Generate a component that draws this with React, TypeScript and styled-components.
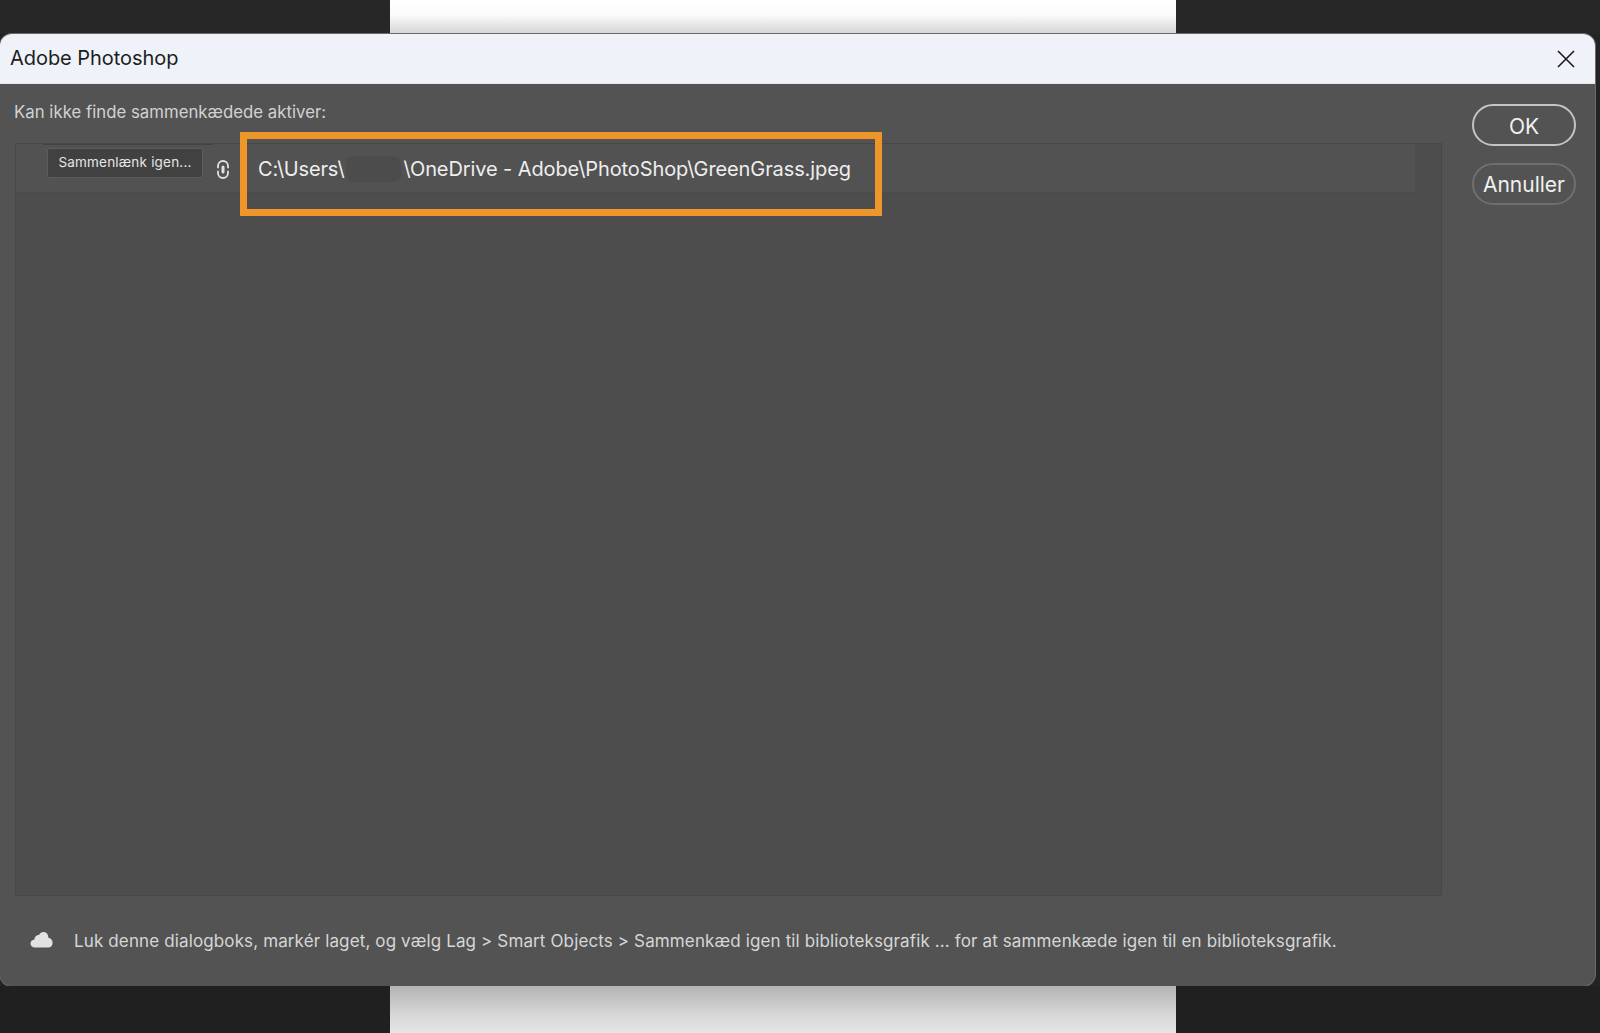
import React from "react";
import styled, { createGlobalStyle } from "styled-components";

const GlobalStyle = createGlobalStyle`
  html, body {
    margin: 0;
    padding: 0;
    background: #232323;
  }

  body {
    font-family: Inter, "Noto Sans", "Liberation Sans", sans-serif;
    overflow: hidden;
  }
`;

const Page = styled.div`
  width: 1600px;
  height: 1033px;
  display: flex;
  flex-direction: column;
  overflow: hidden;
`;

const Strip = styled.div<{ $bottom?: boolean }>`
  flex: ${(p) => (p.$bottom ? "1" : "0 0 34px")};
  background: ${(p) => (p.$bottom ? "#202020" : "#272727")};
  padding-left: 390px;
`;

const Sheet = styled.div<{ $bottom?: boolean }>`
  width: 786px;
  height: 100%;
  background: ${(p) =>
    p.$bottom
      ? "linear-gradient(to bottom, #b4b4b4, #d6d6d6 60%, #e6e6e6)"
      : "linear-gradient(to bottom, #ffffff, #fafafa 45%, #d4d4d4)"};
`;

const Dialog = styled.div`
  width: 1595px;
  height: 952px;
  display: flex;
  flex-direction: column;
  background: #535353;
  border-radius: 12px;
  overflow: hidden;
  box-shadow: 0 0 0 1px #6a6a6a;
`;

const TitleBar = styled.div`
  flex: 0 0 50px;
  display: flex;
  align-items: center;
  justify-content: space-between;
  padding: 0 19px 0 10px;
  background: #eff3f9;
  border-bottom: 1px solid #e8e8e8;
  box-sizing: border-box;
`;

const Title = styled.span`
  font-size: 20px;
  color: #1d1d1d;
  letter-spacing: -0.05px;
  margin-top: -1px;
`;

const CloseIcon = styled.svg`
  width: 20px;
  height: 20px;
  display: block;
`;

const Body = styled.div`
  flex: 1;
  display: flex;
  min-height: 0;
`;

const Main = styled.div`
  width: 1442px;
  padding: 17px 0 0 15px;
  box-sizing: border-box;
  display: flex;
  flex-direction: column;
`;

const Heading = styled.div`
  font-size: 16.75px;
  line-height: 22px;
  color: #d2d2d2;
  letter-spacing: 0.02px;
  margin-left: -1px;
`;

const Panel = styled.div`
  margin-top: 20px;
  height: 753px;
  background: #4d4d4d;
  border: 1px solid #474747;
  box-sizing: border-box;
`;

const AssetRow = styled.div`
  position: relative;
  width: 1399px;
  height: 49px;
  display: flex;
  align-items: flex-start;
  background: #525252;
  border-bottom: 1px solid #4a4a4a;
  box-sizing: border-box;

  &::before {
    content: "";
    position: absolute;
    left: 27px;
    top: 0;
    width: 170px;
    height: 1px;
    background: #424242;
  }
`;

const RelinkButton = styled.div`
  margin: 4px 0 0 31px;
  width: 156px;
  height: 30px;
  padding-bottom: 2px;
  display: flex;
  align-items: center;
  justify-content: center;
  background: #414141;
  border: 1px solid #5c5c5c;
  border-radius: 2px;
  box-sizing: border-box;
  color: #e6e6e6;
  font-size: 13.5px;
  letter-spacing: 0.2px;
`;

const LinkIcon = styled.svg`
  width: 12px;
  height: 19px;
  margin: 16px 0 0 14px;
  display: block;
`;

const AssetPath = styled.div`
  margin: 12px 0 0 29px;
  font-size: 20px;
  line-height: 26px;
  letter-spacing: -0.1px;
  color: #eeeeee;
  white-space: nowrap;
`;

const Redacted = styled.span`
  display: inline-block;
  width: 55px;
  height: 26px;
  margin: 0 3px 0 1px;
  vertical-align: -6px;
  border-radius: 8px;
  background: #4c4c4c;
`;

const Highlight = styled.div`
  position: absolute;
  left: 224px;
  top: -12px;
  width: 642px;
  height: 84px;
  border: 7px solid #ef962a;
  box-sizing: border-box;
  pointer-events: none;
`;

const Hint = styled.div`
  margin-top: 35px;
  margin-left: 15px;
  display: flex;
  align-items: center;
  gap: 21px;
  color: #d6d6d6;
  font-size: 17px;
  letter-spacing: 0.13px;
  white-space: nowrap;
`;

const CloudIcon = styled.svg`
  width: 23px;
  height: 17px;
  display: block;
  flex: none;
  margin-top: -4px;
`;

const Side = styled.div`
  flex: 1;
  padding: 20px 0 0 30px;
  display: flex;
  flex-direction: column;
  gap: 17px;
`;

const PillButton = styled.div<{ $primary?: boolean }>`
  width: 104px;
  height: 42px;
  display: flex;
  align-items: center;
  justify-content: center;
  padding-top: ${(p) => (p.$primary ? "3px" : "0")};
  border-radius: 21px;
  border: ${(p) => (p.$primary ? "2px solid #c4c4c4" : "2px solid #6f6f6f")};
  box-sizing: border-box;
  color: #f0f0f0;
  font-size: 21px;
`;

const App = () => {
  return (
    <Page>
      <GlobalStyle />
      <Strip>
        <Sheet />
      </Strip>
      <Dialog>
        <TitleBar>
          <Title>Adobe Photoshop</Title>
          <CloseIcon viewBox="0 0 20 20">
            <path d="M2 2 L18 18 M18 2 L2 18" stroke="#1a1a1a" strokeWidth="1.6" fill="none" />
          </CloseIcon>
        </TitleBar>
        <Body>
          <Main>
            <Heading>Kan ikke finde sammenkædede aktiver:</Heading>
            <Panel>
              <AssetRow>
                <RelinkButton>Sammenlænk igen...</RelinkButton>
                <LinkIcon viewBox="0 0 12 19">
                  <rect x="1" y="1" width="10" height="17" rx="5" stroke="#e0e0e0" strokeWidth="1.8" fill="none" />
                  <path d="M6 7 V12" stroke="#e0e0e0" strokeWidth="3" strokeLinecap="round" />
                  <path d="M0 9.5 H3 M9 9.5 H12" stroke="#525252" strokeWidth="2.5" />
                </LinkIcon>
                <AssetPath>
                  C:\Users\
                  <Redacted />
                  \OneDrive - Adobe\PhotoShop\GreenGrass.jpeg
                </AssetPath>
                <Highlight />
              </AssetRow>
            </Panel>
            <Hint>
              <CloudIcon viewBox="0 0 23 17">
                <path
                  d="M5 16.5 C2 16.5 0.5 14.5 0.5 12.5 C0.5 10.3 2.2 8.8 4.2 8.8 C4.6 5.6 6.8 3.8 9 4 C10 1.8 12 0.8 14 1 C16.6 1.2 18.4 3.4 18.4 6.8 C21 7.2 22.6 9.4 22.6 12 C22.6 14.6 20.8 16.5 18.4 16.5 Z"
                  fill="#e2e2e2"
                />
              </CloudIcon>
              Luk denne dialogboks, markér laget, og vælg Lag &gt; Smart Objects &gt; Sammenkæd igen til biblioteksgrafik ... for at sammenkæde igen til en biblioteksgrafik.
            </Hint>
          </Main>
          <Side>
            <PillButton $primary>OK</PillButton>
            <PillButton>Annuller</PillButton>
          </Side>
        </Body>
      </Dialog>
      <Strip $bottom>
        <Sheet $bottom />
      </Strip>
    </Page>
  );
};

export default App;
